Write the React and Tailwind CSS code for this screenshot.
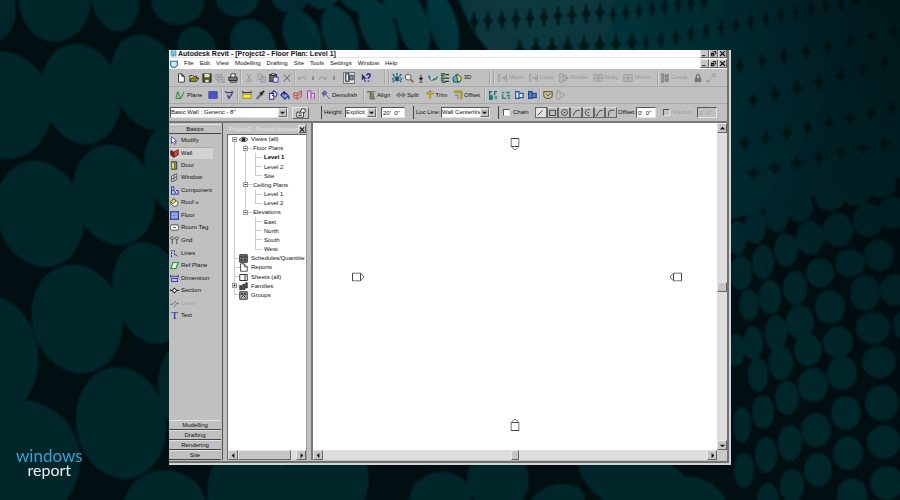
import React from "react";

/* ---------- backdrop ---------- */

// cx, cy, rx, ry, rotation
const discs = [
  [55, 0, 36, 42, 0], [-20, 10, 36, 38, 0], [5, 105, 46, 54, -12], [81, 94, 39, 51, -14],
  [147, 82, 34, 49, -18], [40, 214, 43, 54, -16], [114, 195, 40, 51, -16], [178, 172, 32, 48, -18],
  [77, 319, 45, 55, -14], [150, 293, 36, 52, -16], [-8, 355, 46, 60, -8], [121, 423, 45, 56, -10],
  [192, 392, 33, 50, -12], [22, 460, 58, 60, -10], [165, 506, 41, 36, 0], [115, 0, 23, 32, -14],
  [178, 0, 27, 25, 0], [197, 50, 19, 24, -20], [253, 46, 22, 28, -24], [237, 0, 21, 17, 0],
  [290, -5, 19, 18, 0], [302, 36, 18, 27, -24], [340, 35, 17, 30, -20], [378, 28, 17, 32, -22],
  [322, -8, 18, 17, 0], [355, -8, 16, 20, -20], [413, 24, 15, 34, -16], [443, 24, 14, 34, -16],
  [395, 0, 12, 20, -14], [250, 492, 43, 50, 0], [328, 478, 41, 44, -12], [440, 501, 32, 29, -20],
  [498, 480, 31, 32, -20], [556, 505, 30, 20, -20], [620, 480, 46, 26, 32], [668, 488, 40, 20, 42],
  [700, 505, 34, 24, 40],
  [838, 230, 15, 17, 0], [868, 220, 15, 17, 0], [893, 213, 15, 16, 0], [810, 238, 14, 17, 0],
  [786, 250, 12, 17, 0], [763, 262, 11, 17, 0], [741, 273, 11, 17, 0], [879, 255, 15, 16, 0],
  [850, 263, 15, 14, 0], [820, 273, 14, 15, 0], [795, 288, 12, 17, 0], [770, 297, 11, 17, 0],
  [749, 305, 10, 16, 0], [865, 293, 15, 18, 0], [830, 307, 15, 17, 0], [800, 322, 14, 17, 0],
  [776, 333, 11, 18, 0], [753, 343, 10, 17, 0], [736, 350, 9, 16, 0], [873, 328, 17, 16, 0],
  [838, 342, 15, 16, 0], [808, 350, 14, 16, 0], [781, 363, 12, 17, 0], [758, 375, 10, 17, 0],
  [895, 290, 15, 16, 0], [907, 325, 14, 16, 0], [879, 362, 17, 16, 0], [842, 373, 15, 17, 0],
  [813, 385, 15, 17, 0], [787, 398, 12, 17, 0], [763, 412, 11, 17, 0], [742, 425, 9, 18, 0],
  [882, 403, 17, 18, 0], [846, 413, 15, 17, 0], [816, 430, 15, 17, 0], [790, 443, 12, 18, 0],
  [766, 455, 11, 18, 0], [744, 470, 10, 18, 0], [884, 442, 17, 17, 0], [848, 453, 15, 17, 0],
  [818, 470, 14, 17, 0], [792, 486, 12, 17, 0], [768, 500, 11, 17, 0], [887, 483, 17, 17, 0],
  [852, 495, 15, 17, 0], [800, 207, 13, 15, 0], [777, 215, 12, 17, 0], [755, 227, 11, 17, 0],
  [737, 238, 10, 17, 0], [830, 197, 15, 14, 0], [856, 192, 15, 14, 0], [881, 184, 15, 14, 0],
];

// start x, start y, step x, step y, count, half width, half height
const gapRows = [
  [474, 22, 14, -1, 10, 4, 9], [613, 15, 13, -2, 8, 3, 7], [520, 50, 16, -1, 8, 5, 10],
  [646, 43, 15, -3, 16, 3, 7], [740, 66, 22, -5, 8, 4, 7], [753, 100, 22, -6, 8, 5, 7],
  [745, 143, 21, -5, 9, 5, 7], [753, 173, 22, -5, 8, 6, 6],
];

function Backdrop() {
  const gaps = gapRows.flatMap(([x, y, dx, dy, n, w, h]) =>
    Array.from({ length: n }, (_, i) => {
      const cx = x + dx * i;
      const cy = y + dy * i;
      return `M${cx} ${cy - h}Q${cx + 1} ${cy} ${cx + w} ${cy}Q${cx + 1} ${cy} ${cx} ${cy + h}Q${cx - 1} ${cy} ${cx - w} ${cy}Q${cx - 1} ${cy} ${cx} ${cy - h}Z`;
    })
  );
  return (
    <svg className="absolute inset-0 h-full w-full" viewBox="0 0 900 500" preserveAspectRatio="xMidYMid slice" aria-hidden="true">
      <defs>
        <radialGradient id="glow" gradientUnits="userSpaceOnUse" cx="540" cy="0" r="360">
          <stop offset="0" stopColor="#08393f" />
          <stop offset="0.5" stopColor="#053036" />
          <stop offset="1" stopColor="#02252a" />
        </radialGradient>
        <linearGradient id="fade" gradientUnits="userSpaceOnUse" x1="680" x2="900" y1="140" y2="0">
          <stop offset="0" stopColor="#000a0d" stopOpacity="0" />
          <stop offset="1" stopColor="#000a0d" stopOpacity="0.5" />
        </linearGradient>
        <filter id="soft" filterUnits="userSpaceOnUse" x="-20" y="-20" width="940" height="540">
          <feGaussianBlur stdDeviation="1" />
        </filter>
      </defs>
      <rect width="900" height="500" fill="#010f12" />
      <g filter="url(#soft)" fill="url(#glow)">
        <path d="M456 -10H910V176Q820 190 700 230V60H500Q470 40 456 -10Z" />
        {discs.map(([cx, cy, rx, ry, r], i) => (
          <ellipse key={i} cx={cx} cy={cy} rx={rx} ry={ry} transform={`rotate(${r} ${cx} ${cy})`} />
        ))}
        <path d={gaps.join("")} fill="#011418" stroke="#011418" strokeWidth="2" strokeLinejoin="round" />
      </g>
      <rect width="900" height="500" fill="url(#fade)" />
    </svg>
  );
}

/* ---------- icons, all on a 12 x 12 grid ---------- */

const K = "#222";
const N = "#2f2f9c";
const G = "#969696";

const glyphs = {
  app: <><rect x="1" y="1" width="10" height="10" fill="#3b9fc4" /><path d="M3 10V5h2V3h3v7" stroke="#fff" fill="none" /></>,
  doc: <path d="M1 2h10v6L8 11H3L1 8Z" fill="#cfe9f2" stroke="#1f6d93" strokeWidth="1.6" />,
  new: <path d="M3 1h4l3 3v7H3ZM7 1v3h3" fill="#fff" stroke={K} />,
  open: <><path d="M1 10V3h3l1 1h4v2" fill="#e8e06a" stroke={K} /><path d="M1 10l2-4h9l-3 4Z" fill="#a39a14" stroke={K} /></>,
  save: <><path d="M1 1h10v10H1Z" fill="#55551a" stroke={K} /><path d="M3 1h6v4H3ZM4 8h4v3H4Z" fill="#ddd" /></>,
  saveOff: <path d="M1 2h7v6H1ZM3 2v3h3V2M4 5h7v6H4ZM6 8h3v3" fill="none" stroke={G} />,
  print: <><path d="M3 5l1-4h5l-1 4" fill="#fff" stroke={K} /><path d="M1 5h10v4H1Z" fill="#777" stroke={K} /><path d="M3 9h7v2H3Z" fill="#bbb" stroke={K} /></>,
  cut: <path d="M4 1l3 7M8 1L5 8M4 8a1.4 1.4 0 1 0 .1 0M8 8a1.4 1.4 0 1 0 .1 0" fill="none" stroke={G} />,
  copy: <path d="M1 1h5v7H1ZM5 4h5v7H5ZM7 6h2M7 8h2" fill="#bbb" stroke={G} />,
  paste: <><path d="M1 2h8v8H1Z" fill="#77741f" stroke={N} strokeWidth="1.4" /><path d="M3 1h4v2H3Z" fill="#ddd" stroke={K} /><path d="M5 5h6v6H5Z" fill="#dde" stroke={N} /></>,
  del: <path d="M2 2l8 8M10 2l-8 8" stroke="#7b7b7b" strokeWidth="1.3" />,
  undo: <path d="M2 4v3h3M3 7q4-4 7-1v2" fill="none" stroke={G} strokeWidth="1.2" />,
  redo: <path d="M10 4v3H7M9 7Q5 3 2 6v2" fill="none" stroke={G} strokeWidth="1.2" />,
  downOff: <path d="M6 3v5M5 6l1 2 1-2Z" fill="#777" stroke="#777" />,
  down: <path d="M6 2v6M4 6l2 3 2-3ZM4 11h4" fill={K} stroke={K} />,
  panel: <><path d="M1 1h4v10H1Z" fill="#fff" stroke="#234" strokeWidth="1.6" /><path d="M6 3h5v6H6Z" fill="#7f9696" stroke="#234" /></>,
  help: <><path d="M1 1v8l2-2 2 4 1-1-2-3h3Z" fill={N} /><path d="M7 3q0-2 2-2t2 2q0 1-2 3v1M9 9v1.5" fill="none" stroke={N} strokeWidth="2" /></>,
  eye: <><path d="M0 7q6-5 12 0-6 5-12 0Z" fill="#8cc3da" stroke="#146080" /><circle cx="6" cy="7" r="2.4" fill="#12506e" /><path d="M3 4L1 1M6 3V0M9 4l2-3M2 9l-1 2M10 9l1 2" stroke="#146080" strokeWidth="1.5" /></>,
  zoom: <><circle cx="5" cy="5" r="3.5" fill="#e7eff0" stroke="#444" /><path d="M8 8l3 3" stroke="#7b6d1a" strokeWidth="2" /></>,
  spin: <><path d="M1 3q1 5 5 5t5-4" fill="none" stroke="#1b8080" strokeWidth="2" /><path d="M3 6a2 1.5 0 1 0 3 0M7 6a2 1.5 0 1 0 3-2" fill="#fff" stroke="#2c6d6d" /></>,
  layers: <path d="M1 1h5M1 3.5h4M1 6h5M1 8.500h4M2 11h5M6 2h5M6 6h5M6 10h5" stroke="#1d4a2b" strokeWidth="1.5" />,
  house: <><path d="M1 6l4-4 4 4v5H2Z" fill="#59b2cd" stroke="#14455e" /><path d="M6 1l5 4v4l-4 2-1-5Z" fill="#e9d94b" stroke="#14455e" /></>,
  box: <path d="M1 2v8M1 2h2M1 10h2M4 6h5M7 4l2 2-2 2M10 2v8" fill="none" stroke={G} strokeWidth="1.2" />,
  turn: <path d="M1 1h4v10H1ZM5 3h3v6H5M9 6h2M8 4l3 2-3 2" fill="none" stroke={G} strokeWidth="1.2" />,
  grid: <path d="M1 2h4v8H1ZM7 2h4v8H7ZM1 6h4M7 6h4" fill="none" stroke={G} />,
  group: <path d="M1 1h3v10H1M6 2h4v3H6ZM6 7h4v3H6Z" fill="#999" stroke="#777" />,
  lock: <><path d="M4 6V3q2-3 4 0v3" fill="none" stroke="#6b6b6b" strokeWidth="1.5" /><path d="M2 6h8v5H2Z" fill="#777" /></>,
  link: <path d="M1 9h3v2H1ZM4 8l4-4M8 1h3v3H8Z" fill="none" stroke={G} />,
  plane: <path d="M1 10l2-7 4 7 4-8M1 10h6M2 3h3" fill="none" stroke="#3c9149" strokeWidth="1.3" />,
  blue: <path d="M1 2h10v8H1Z" fill="#4a55c8" stroke="#39409f" />,
  check: <><path d="M2 3h8M1 2l3 1M9 1l2 2" stroke="#446" strokeWidth="1.5" /><path d="M4 6l2 4 4-6" fill="none" stroke="#3939a8" strokeWidth="1.8" /></>,
  tape: <><path d="M1 5h10v5H1Z" fill="#f0ea38" stroke="#8a8521" /><path d="M1 1v3M11 1v3M1 3h10" stroke={K} /></>,
  drop: <><path d="M2 10l5-6 1 1-5 6Z" fill="#ddd" stroke={K} /><path d="M6 3l3 3M8 4l3-3" stroke={K} strokeWidth="2.2" /></>,
  pour: <path d="M2 4h5v7H2ZM4 4l3-3 4 3-2 5M5 6l3 2" fill="#fff" stroke={N} strokeWidth="1.3" />,
  bucket: <path d="M1 6l4-4 5 5-4 4ZM5 2v4M10 7q2 3 0 4" fill="#81a4df" stroke={N} strokeWidth="1.4" />,
  wallRed: <path d="M1 3l4 1 5-3v7L5 11 1 9ZM5 4v7M1 6l4 1 5-3" fill="#dfaaa8" stroke="#a44c4c" />,
  door2: <path d="M2 11V1h4v10M6 4h4v7" fill="#e6d5e8" stroke="#a43bb0" strokeWidth="1.2" />,
  hammer: <path d="M1 4l4-3 2 3-3 2ZM5 5l6 6M3 2v6" fill="#6688ba" stroke="#414b91" />,
  align: <><path d="M1 2h10M5 2v9" stroke="#555" strokeWidth="1.3" /><path d="M6 4h3v3H6ZM6 8h4v3H6Z" fill="#9b9b2c" stroke="#666" /></>,
  split: <path d="M0 6l4-3v2h4V3l4 3-4 3V7H4v2Z" fill="#85878a" stroke="#666" strokeWidth=".5" />,
  trim: <><path d="M1 4h10M6 4v7" stroke="#b0a12d" strokeWidth="2.5" /><path d="M4 2l2-2 2 2" fill="#667" /></>,
  offset: <><path d="M1 2h9v9" fill="none" stroke="#a49d30" strokeWidth="3" /><path d="M2 6h4v5" fill="none" stroke="#666" /></>,
  teal: <><path d="M1 2h4M7 2h4M2 2v4M8 2v4M2 7h3v4H2Z" fill="#287" stroke="#1b6f6c" strokeWidth="1.6" /><path d="M8 7h3v4H8Z" fill="#3a8" /></>,
  teal2: <path d="M1 3h3M6 3h5M2 5v5h4M8 5v2h3M8 10h3" fill="none" stroke="#318683" strokeWidth="1.8" />,
  blueA: <path d="M2 1v10M2 2h4v8H2M6 4h5v5H6" fill="#dcecff" stroke="#32579f" strokeWidth="1.5" />,
  blueB: <path d="M2 1v10M2 2h4v8H2M6 4h5v5H6" fill="#5b83cc" stroke="#1f4a94" strokeWidth="1.5" />,
  shield: <path d="M1 2h10v6L8 10H4L1 8ZM4 5l2 2 3-3" fill="#c9c58f" stroke="#4f4c2e" strokeWidth="1.2" />,
  exitOff: <path d="M1 1h4v10H1ZM6 4h3v4H6M9 6h2" fill="none" stroke={G} />,
  props: <path d="M1 5h8v6H1ZM3 7h4M3 9h4M5 5l2-4h4v4L9 6" fill="#fff" stroke={K} />,
  modify: <path d="M2 1v9l2-2 2 3 2-1-2-3h3Z" fill="#fff" stroke={N} />,
  wall: <><path d="M1 2l4 2v7L1 8Z" fill="#8c1d1d" stroke="#511" /><path d="M5 4l6-3v7l-6 3Z" fill="#cc4a42" stroke="#511" /></>,
  door: <><path d="M2 1h7v10H2Z" fill="#8b8b8b" stroke={K} /><path d="M2 1l4 2v8l-4-1Z" fill="#e4dd43" stroke="#555" /></>,
  window: <path d="M2 4l7-3v8l-7 3ZM5.5 2.5v8M2 8l7-3" fill="#d0d4d8" stroke="#444" />,
  component: <path d="M2 1h3v5H2ZM2 6v5h5V8L5 6M8 6h3v5H8" fill="#bcc4ef" stroke={N} strokeWidth="1.2" />,
  roof: <><path d="M1 5l4-4 6 5-2 5H5L1 8Z" fill="#eee" stroke="#333" /><path d="M1 5l4-4 3 3-4 4Z" fill="#e4dc4c" stroke="#444" /></>,
  floor: <><path d="M0 0h12v12H0Z" fill="#5a6fce" stroke="#26348d" strokeWidth="1.5" /><path d="M3 3l6 6M9 3L3 9M3 3h6v6H3Z" fill="none" stroke="#cbd3ff" /></>,
  tag: <><rect x="0.5" y="2.5" width="11" height="7" rx="2" fill="#fff" stroke={K} /><path d="M4 6h4" stroke={K} /></>,
  gridIc: <path d="M3 1a2 2 0 1 0 .1 0M9 1a2 2 0 1 0 .1 0M3 5v6M9 5v6" fill="none" stroke="#333" />,
  lines: <path d="M2 11V2h4v6h2l3 2" fill="none" stroke={N} strokeDasharray="3 1" strokeWidth="1.2" />,
  refPlane: <path d="M1 10l3-8h7l-3 8Z" fill="#e2f3e0" stroke="#23943b" strokeWidth="1.6" />,
  dimension: <path d="M1 1v4M11 1v4M1 3h10M2 6h8v4H2Z" fill="#b9c2e8" stroke={N} strokeWidth="1.2" />,
  section: <path d="M0 6h3M9 6h3M6 3l3 3-3 3-3-3ZM0 4v2" fill="#fff" stroke={K} strokeWidth="1.4" />,
  level: <path d="M0 7h4l3-4 2 3-4 5M9 6h3" fill="none" stroke="#777" strokeWidth="1.2" />,
  views: <><path d="M0 6q6-6 12 0-6 6-12 0Z" fill="#ddd" stroke={K} /><circle cx="6" cy="6" r="2.5" fill={K} /></>,
  sched: <path d="M1 1h10v10H1ZM1 4h10M4 1v10M8 1v10M1 8h10" fill="#aaa" stroke={K} strokeWidth="1.3" />,
  report: <path d="M2 1h5l4 4v6H2ZM7 1v4h4" fill="#fff" stroke={K} />,
  sheet: <path d="M1 2h10v8H1ZM8 2v8" fill="#fff" stroke={K} strokeWidth="1.2" />,
  family: <path d="M1 5h3v5H1ZM5 3h3v7H5ZM9 1h2v7H9Z" fill="#555" stroke={K} />,
  groups: <path d="M1 1h10v10H1ZM3 3h2v2H3ZM7 3h2v2H7ZM3 9l3-3 3 3" fill="#bbb" stroke={K} strokeWidth="1.2" />,
  dLine: <path d="M2 10L9 3" stroke={K} />,
  dRect: <path d="M2 3h8v7H2Z" fill="none" stroke={K} />,
  dCircle: <><circle cx="6" cy="6" r="4" fill="none" stroke={K} /><circle cx="6" cy="6" r="1" fill={K} /></>,
  dArc: <path d="M2 10q1-7 8-7" fill="none" stroke={K} />,
  dArcC: <path d="M9 2q-6 0-6 4t6 4M6 6h2" fill="none" stroke={K} />,
  dTan: <path d="M1 10h2q1-7 7-7" fill="none" stroke={K} />,
  dFillet: <path d="M2 11V7q0-4 4-4h4" fill="none" stroke={K} />,
};

const Icon = ({ name, size = "size-[10px]" }) => (
  <svg viewBox="0 0 12 12" className={`${size} shrink-0`} aria-hidden="true">{glyphs[name]}</svg>
);

/* ---------- small controls ---------- */

const IconButton = ({ name, className = "" }) => (
  <button type="button" aria-label={name} className={`flex h-3 w-[10px] shrink-0 items-center justify-center ${className}`}>
    <Icon name={name} />
  </button>
);

const TextButton = ({ name, children, off = false }) => (
  <button type="button" disabled={off} className={`flex shrink-0 items-center gap-px whitespace-nowrap ${off ? "text-[#989898]" : ""}`}>
    <Icon name={name} />
    {children}
  </button>
);

const Group = ({ names, className }) => (
  <div className={`flex shrink-0 items-center justify-around ${className}`}>
    {names.map((n, i) => <IconButton key={i} name={n} />)}
  </div>
);

const Sep = ({ className = "" }) => (
  <div className={`flex w-1 shrink-0 justify-center self-stretch py-px ${className}`}>
    <span className="border-l border-r border-l-[#a6a6a6] border-r-[#d2d2d2]" />
  </div>
);

const HeavySep = ({ className = "" }) => <span className={`h-[13px] w-px shrink-0 bg-[#444] ${className}`} />;

const Arrow = ({ d = "M1 3h6L4 6Z" }) => (
  <svg viewBox="0 0 8 8" className="size-[7px]" aria-hidden="true"><path d={d} fill="#111" /></svg>
);

const raised = "border border-t-[#e6e6e6] border-l-[#e6e6e6] border-r-[#666] border-b-[#666] bg-[#c6c6c6]";
const sunken = "border border-t-[#555] border-l-[#555] border-r-[#e4e4e4] border-b-[#e4e4e4]";

const Combo = ({ label, value, className }) => (
  <span className={`flex h-[11px] shrink-0 bg-white ${sunken} ${className}`}>
    <select aria-label={label} className="min-w-0 flex-1 appearance-none overflow-hidden bg-white outline-none">
      <option>{value}</option>
    </select>
    <span className={`flex w-[9px] shrink-0 items-center justify-center ${raised}`}><Arrow /></span>
  </span>
);

const ScrollButton = ({ label, d }) => (
  <button type="button" aria-label={label} className={`flex size-[10px] shrink-0 items-center justify-center ${raised}`}>
    <Arrow d={d} />
  </button>
);

const LEFT = "M5 1v6L2 4Z";
const RIGHT = "M3 1v6l3-3Z";
const UP = "M1 5h6L4 2Z";
const DOWN = "M1 3h6L4 6Z";
const CROSS = "M1 1l1 0 2 2 2-2h1v1L5 4l2 2v1H6L4 5 2 7H1V6l2-2-2-2Z";

const WindowButtons = () => (
  <div className="flex shrink-0">
    {[["Minimise", "M1 6h4v1H1Z"], ["Restore", "M3 1h4v4H6V2H3ZM1 3h4v4H1ZM2 5v1h2V5Z"], ["Close", CROSS]].map(([l, d]) => (
      <button key={l} type="button" aria-label={l} className={`flex h-[9px] w-[9px] items-center justify-center ${raised}`}>
        <Arrow d={d} />
      </button>
    ))}
  </div>
);

/* ---------- window sections ---------- */

const menus = ["File", "Edit", "View", "Modelling", "Drafting", "Site", "Tools", "Settings", "Window", "Help"];

const Header = () => (
  <header className="border-r-2 border-[#707070] bg-white">
    <div className="flex h-2 items-center justify-between border-b border-[#e2e2e2]">
      <div className="flex items-center gap-px pl-px">
        <Icon name="app" size="size-[7px]" />
        <h1 className="whitespace-nowrap text-[7px] leading-[7px] font-bold text-[#111]">Autodesk Revit - [Project2 - Floor Plan: Level 1]</h1>
      </div>
      <WindowButtons />
    </div>
    <div className="flex h-[11px] items-center justify-between">
      <nav className="flex items-center gap-[6px] pl-px">
        <Icon name="doc" size="size-2" />
        {menus.map((m) => <button key={m} type="button">{m}</button>)}
      </nav>
      <WindowButtons />
    </div>
  </header>
);

const StandardBar = () => (
  <div className="flex h-[18px] items-center border-b border-[#a8a8a8] pl-[6px]">
    <Group className="w-16" names={["new", "open", "save", "saveOff", "print"]} />
    <Sep />
    <Group className="w-[50px]" names={["cut", "copy", "paste", "del"]} />
    <Sep />
    <Group className="w-[42px]" names={["undo", "downOff", "redo", "downOff"]} />
    <button type="button" aria-label="Browser" className="ml-1 flex size-3 shrink-0 items-center justify-center border border-[#777] bg-[#dcdcdc]">
      <Icon name="panel" size="size-[9px]" />
    </button>
    <IconButton name="help" className="ml-[6px]" />
    <Sep className="ml-3" />
    <Sep />
    <Group className="w-[72px]" names={["eye", "zoom", "down", "spin", "layers", "house"]} />
    <button type="button" className="w-[9px]">3D</button>
    <Sep className="ml-4" />
    <Sep />
    <div className="ml-[2px] flex w-[152px] shrink-0 justify-between">
      <TextButton name="box" off>Move</TextButton>
      <TextButton name="box" off>Copy</TextButton>
      <TextButton name="turn" off>Rotate</TextButton>
      <TextButton name="grid" off>Array</TextButton>
      <TextButton name="grid" off>Mirror</TextButton>
    </div>
    <Sep className="ml-[6px]" />
    <TextButton name="group" off>Group</TextButton>
    <IconButton name="lock" className="ml-[5px]" />
    <IconButton name="link" className="ml-[3px]" />
  </div>
);

const ToolsBar = () => (
  <div className="flex h-[17px] items-center border-b border-[#a8a8a8] pl-[6px]">
    <TextButton name="plane"><span className="w-[22px] pl-px text-left">Plane</span></TextButton>
    <IconButton name="blue" />
    <Sep className="ml-[2px]" />
    <IconButton name="check" />
    <Sep className="ml-[2px]" />
    <Group className="ml-px w-[76px]" names={["tape", "drop", "pour", "bucket", "wallRed", "door2"]} />
    <Sep />
    <div className="flex w-[41px]"><TextButton name="hammer">Demolish</TextButton></div>
    <Sep />
    <div className="flex w-[114px] shrink-0 justify-between">
      <TextButton name="align">Align</TextButton>
      <TextButton name="split">Split</TextButton>
      <TextButton name="trim">Trim</TextButton>
      <TextButton name="offset">Offset</TextButton>
    </div>
    <Sep className="ml-[3px]" />
    <Group className="w-[51px]" names={["teal", "teal2", "blueA", "blueB"]} />
    <Sep />
    <Group className="w-[25px]" names={["shield", "exitOff"]} />
  </div>
);

const OptionsBar = () => (
  <form className="flex h-[19px] items-center border-b-2 border-[#777] pl-px">
    <Combo label="Type" value={'Basic Wall : Generic - 8"'} className="w-[118px]" />
    <button type="button" aria-label="Properties" className={`ml-1 flex h-3 w-[17px] shrink-0 items-center justify-center ${raised}`}>
      <Icon name="props" />
    </button>
    <HeavySep className="ml-3" />
    <label className="ml-[2px] flex w-[21px] shrink-0">Height:</label>
    <Combo label="Height" value="Explicit" className="w-8" />
    <input aria-label="Height value" defaultValue={"20'  0''"} className={`ml-1 h-[11px] w-6 shrink-0 bg-white pl-px outline-none ${sunken}`} />
    <HeavySep className="ml-2" />
    <label className="ml-[2px] flex w-6 shrink-0 whitespace-nowrap">Loc Line:</label>
    <Combo label="Loc Line" value="Wall Centerline" className="ml-px w-[49px]" />
    <HeavySep className="ml-2" />
    <label className="ml-1 flex w-[30px] shrink-0 items-center gap-[3px]">
      <input type="checkbox" className={`size-[7px] appearance-none bg-white ${sunken}`} />
      Chain
    </label>
    <div className="ml-[2px] flex w-[82px] shrink-0">
      {["dLine", "dRect", "dCircle", "dArc", "dArcC", "dTan", "dFillet"].map((n, i) => (
        <button key={n} type="button" aria-label={n} className={`flex h-[11px] flex-1 items-center justify-center border border-[#666] ${i === 0 ? "bg-[#e6e6e6]" : "border-t-[#ddd]"}`}>
          <Icon name={n} size="size-[9px]" />
        </button>
      ))}
    </div>
    <label className="ml-px flex w-[18px] shrink-0" htmlFor="offset">Offset:</label>
    <input id="offset" defaultValue={"0'  0''"} className={`h-[11px] w-5 shrink-0 bg-white pl-px outline-none ${sunken}`} />
    <label className="ml-[7px] flex w-[34px] shrink-0 items-center gap-[3px] text-[#a2a2a2]">
      <input type="checkbox" disabled className={`size-[7px] appearance-none ${sunken}`} />
      Radius:
    </label>
    <input aria-label="Radius" disabled defaultValue={"1'  0''"} className={`h-[11px] w-5 shrink-0 bg-transparent pl-px text-[#a2a2a2] ${sunken}`} />
  </form>
);

const tools = [
  ["modify", "Modify"], ["wall", "Wall"], ["door", "Door"], ["window", "Window"], ["component", "Component"],
  ["roof", "Roof »"], ["floor", "Floor"], ["tag", "Room Tag"], ["gridIc", "Grid"], ["lines", "Lines"],
  ["refPlane", "Ref Plane"], ["dimension", "Dimension"], ["section", "Section"], ["level", "Level"], ["text", "Text"],
];

const tab = "h-[10px] w-full border-b border-[#444] border-t border-t-[#e2e2e2] text-center leading-[8px]";

const Palette = () => (
  <aside className="flex w-[54px] shrink-0 flex-col border-r border-[#555] pt-px pr-px">
    <button type="button" className={tab}>Basics</button>
    <div className="flex h-[188px] flex-col justify-between">
      {tools.map(([icon, label]) => (
        <button
          key={label}
          type="button"
          disabled={label === "Level"}
          className={`mr-2 flex h-3 items-center gap-[2px] whitespace-nowrap pl-px ${label === "Wall" ? "border-t border-[#aaa] bg-[#d2d2d2]" : ""} ${label === "Level" ? "text-[#a0a0a0]" : ""}`}
        >
          {icon === "text" ? (
            <span className="w-[9px] shrink-0 font-['Liberation_Serif',serif] text-[11px] leading-none text-[#2525a0]">T</span>
          ) : (
            <Icon name={icon} size="size-[9px]" />
          )}
          {label}
        </button>
      ))}
    </div>
    <div className="mt-auto">
      {["Modelling", "Drafting", "Rendering", "Site"].map((t) => <button key={t} type="button" className={tab}>{t}</button>)}
    </div>
  </aside>
);

// kind, label, icon
const tree = [
  ["root", "Views (all)", "views"],
  ["branch", "Floor Plans"], ["leaf", "Level 1"], ["leaf", "Level 2"], ["leafEnd", "Site"],
  ["branch", "Ceiling Plans"], ["leaf", "Level 1"], ["leafEnd", "Level 2"],
  ["branchEnd", "Elevations"], ["deep", "East"], ["deep", "North"], ["deep", "South"], ["deepEnd", "West"],
  ["item", "Schedules/Quantitie", "sched"], ["item", "Reports", "report"], ["item", "Sheets (all)", "sheet"],
  ["plus", "Families", "family"], ["itemEnd", "Groups", "groups"],
];

const Toggle = ({ x, plus }) => (
  <>
    <rect x={x - 2} y="2.5" width="4" height="4" fill="#fff" stroke="#999" />
    <path d={`M${x - 1} 4.5h2${plus ? `M${x} 3.5v2` : ""}`} stroke="#222" />
  </>
);

const guides = {
  root: <><path d="M6.5 5V10" stroke="#ccc" /><Toggle x={6.5} /></>,
  branch: <><path d="M6.5 0V10M17.5 0V10M17 4.5h7" stroke="#ccc" /><Toggle x={17.5} /></>,
  branchEnd: <><path d="M6.5 0V10M17.5 0V5M17 4.5h7" stroke="#ccc" /><Toggle x={17.5} /></>,
  leaf: <path d="M6.5 0V10M17.5 0V10M27.5 0V10M27 4.5h7" stroke="#ccc" fill="none" />,
  leafEnd: <path d="M6.5 0V10M17.5 0V10M27.5 0V5M27 4.5h7" stroke="#ccc" fill="none" />,
  deep: <path d="M6.5 0V10M27.5 0V10M27 4.5h7" stroke="#ccc" fill="none" />,
  deepEnd: <path d="M6.5 0V10M27.5 0V5M27 4.5h7" stroke="#ccc" fill="none" />,
  item: <path d="M6.5 0V10M6 4.5h6" stroke="#ccc" fill="none" />,
  plus: <><path d="M6.5 0V10M6 4.5h6" stroke="#ccc" /><Toggle x={6.5} plus /></>,
  itemEnd: <path d="M6.5 0V5M6 4.5h6" stroke="#ccc" fill="none" />,
};

const Browser = () => (
  <section className="ml-1 flex w-[80px] shrink-0 flex-col border-r border-[#999] pt-px">
    <div className="flex h-[10px] items-center justify-between">
      <h2 className="whitespace-nowrap pl-[2px] text-[#e6e6e6]">Project2 - Project browser</h2>
      <button type="button" aria-label="Close browser" className={`flex size-2 shrink-0 items-center justify-center ${raised}`}>
        <Arrow d={CROSS} />
      </button>
    </div>
    <div className="flex flex-1 flex-col border-t border-l border-[#666] bg-white">
      <ul className="flex h-[165px] flex-col justify-between">
        {tree.map(([kind, label, icon], i) => {
          const pad = icon ? "w-[11px]" : kind.startsWith("branch") ? "w-[25px]" : "w-9";
          return (
            <li key={i} className={`flex h-[9px] items-center whitespace-nowrap ${i === 2 ? "font-bold text-black" : ""}`}>
              <svg className={`h-[10px] shrink-0 overflow-visible ${pad}`} aria-hidden="true">{guides[kind]}</svg>
              {icon && <span className="mr-[3px] flex"><Icon name={icon} size="size-[9px]" /></span>}
              {label}
            </li>
          );
        })}
      </ul>
      <div className="mt-auto flex h-[10px] bg-[#dedede]">
        <ScrollButton label="Scroll left" d={LEFT} />
        <span className={`mr-[5px] flex-1 ${raised}`} />
        <ScrollButton label="Scroll right" d={RIGHT} />
      </div>
    </div>
  </section>
);

const Marker = ({ className }) => (
  <svg viewBox="0 0 9 13" className={`absolute h-[13px] w-[9px] ${className}`} aria-hidden="true">
    <path d="M.5.5h8v8h-8Z" fill="#fff" stroke="#444" />
    <path d="M1 9l3.5 3L8 9" fill="none" stroke="#777" />
  </svg>
);

const Canvas = () => (
  <section className="ml-1 flex min-w-0 flex-1 flex-col border-l-2 border-[#777]">
    <div className="flex flex-1">
      <div className="relative flex-1 bg-white">
        <Marker className="top-[15px] left-1/2 -translate-x-1/2" />
        <Marker className="bottom-[19px] left-1/2 -translate-x-1/2 rotate-180" />
        <Marker className="top-[47%] left-[41px] -translate-y-1/2 -rotate-90" />
        <Marker className="top-[47%] right-[37px] -translate-y-1/2 rotate-90" />
      </div>
      <div className="flex w-[10px] flex-col justify-between bg-[#dedede]">
        <ScrollButton label="Scroll up" d={UP} />
        <span className={`h-[10px] ${raised}`} />
        <ScrollButton label="Scroll down" d={DOWN} />
      </div>
    </div>
    <div className="flex h-[10px] bg-[#dedede]">
      <div className="flex flex-1 justify-between">
        <ScrollButton label="Scroll left" d={LEFT} />
        <span className={`w-2 ${raised}`} />
        <ScrollButton label="Scroll right" d={RIGHT} />
      </div>
      <span className="w-[10px] bg-[#cacaca]" />
    </div>
  </section>
);

export default function App() {
  return (
    <main className="relative flex min-h-screen overflow-hidden bg-[#010f12] px-[169px] pt-[50px] pb-[35px] font-['Liberation_Sans',Arial,sans-serif]">
      <Backdrop />
      <div className="relative flex min-w-0 flex-1 flex-col overflow-hidden border-r-2 border-b-2 border-[#d4d4d4] bg-[#c0c0c0] text-[6px] leading-[9px] text-[#111]">
        <Header />
        <div className="flex flex-1 flex-col border-r-2 border-b-2 border-[#707070]">
          <StandardBar />
          <ToolsBar />
          <OptionsBar />
          <div className="flex flex-1 pb-px">
            <Palette />
            <Browser />
            <Canvas />
          </div>
        </div>
      </div>
      <div className="absolute bottom-[23px] left-[16px] flex flex-col items-center font-[Lato,sans-serif] text-[17px] leading-[14px]">
        <span className="text-[#35a3d3]">windows</span>
        <span className="text-[16px] text-[#e8eded]">report</span>
      </div>
    </main>
  );
}
